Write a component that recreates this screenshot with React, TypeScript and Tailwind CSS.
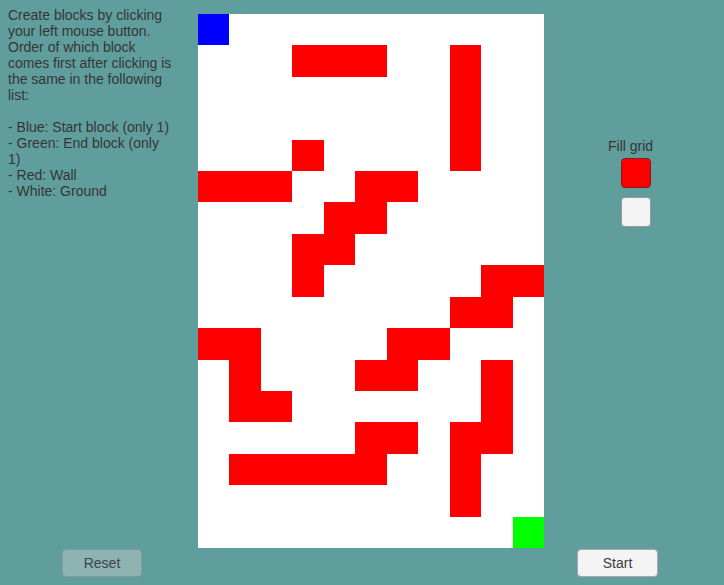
const R = 'r';
const B = 'b';
const G = 'g';

// 11 x 17 grid, '.' = ground
const rows: string[] = [
  'b..........',
  '...rrr..r..',
  '........r..',
  '........r..',
  '...r....r..',
  'rrr..rr....',
  '....rr.....',
  '...rr......',
  '...r.....rr',
  '........rr.',
  'rr....rr...',
  '.r...rr..r.',
  '.rr......r.',
  '.....rr.rr.',
  '.rrrrr..r..',
  '........r..',
  '..........g',
];

function cellClass(c: string): string {
  if (c === R) return 'bg-[#ff0000]';
  if (c === B) return 'bg-[#0000ff]';
  if (c === G) return 'bg-[#00ff00]';
  return 'bg-white';
}

export default function App() {
  return (
    <div className="w-[724px] h-[585px] bg-[#609e9e] overflow-hidden font-['Liberation_Sans',Arial,sans-serif] text-[#353535]">
      <div className="flex">
        <div className="w-[198px] pl-2 pt-[7px]">
          <p className="w-[165px] text-[14px] leading-[16px]">
            Create blocks by clicking your left mouse button. Order of which block comes first after clicking is the same in the following list:
          </p>
          <p className="w-[165px] text-[14px] leading-[16px] mt-[16px]">
            - Blue: Start block (only 1)
            <br />- Green: End block (only 1)
            <br />- Red: Wall
            <br />- White: Ground
          </p>
        </div>

        <div className="mt-[14px] w-[346px] h-[534px] grid grid-cols-11 grid-rows-17">
          {rows.flatMap((row, y) =>
            row.split('').map((c, x) => <div key={`${y}-${x}`} className={cellClass(c)} />)
          )}
        </div>

        <div className="flex flex-col items-start pt-[138px]">
          <span className="ml-[64px] text-[14px] leading-[16px]">Fill grid</span>
          <button className="ml-[77px] mt-[4px] w-[30px] h-[30px] rounded-[4px] bg-[#ff0000] border border-[#8a1a1a]" />
          <button className="ml-[77px] mt-[9px] w-[30px] h-[30px] rounded-[4px] bg-[#f4f4f4] border border-[#9a9a9a]" />
        </div>
      </div>

      <div className="flex mt-px">
        <button className="ml-[62px] w-[80px] h-[28px] rounded-[4px] bg-[#8fb2b2] border border-[#7c9e9e] text-[14px] text-[#3a4646]">
          Reset
        </button>
        <button className="ml-[435px] w-[81px] h-[28px] rounded-[4px] bg-[#f4f4f4] border border-[#a8a8a8] text-[14px] text-[#3c3c3c]">
          Start
        </button>
      </div>
    </div>
  );
}
